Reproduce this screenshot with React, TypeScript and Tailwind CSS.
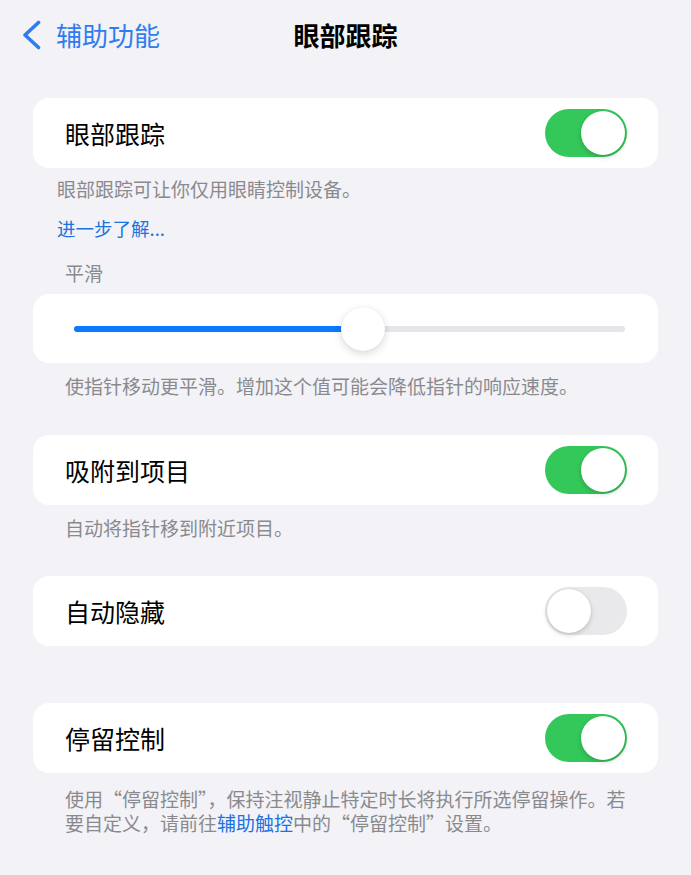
import React from "react";

function Toggle({ on }: { on: boolean }) {
  return (
    <div
      className={
        "relative flex h-[48px] w-[82px] shrink-0 items-center rounded-full p-[2px] " +
        (on ? "justify-end bg-[#34c759]" : "justify-start bg-[#e9e9eb]")
      }
    >
      <div className="h-[44px] w-[44px] rounded-full bg-white shadow-[0_2px_5px_rgba(0,0,0,0.18),0_0_1px_rgba(0,0,0,0.1)]" />
    </div>
  );
}

function SwitchRow({ label, on }: { label: string; on: boolean }) {
  return (
    <div className="flex h-[70px] items-center justify-between rounded-[16px] bg-white pl-[32px] pr-[31px]">
      <span className="text-[25px] leading-none text-black">{label}</span>
      <Toggle on={on} />
    </div>
  );
}

function Footnote({ children, className = "" }: { children: React.ReactNode; className?: string }) {
  return (
    <p className={"pl-[32px] pr-[20px] text-[19px] leading-[26px] text-[#8a8a8e] " + className}>
      {children}
    </p>
  );
}

export default function App() {
  const smoothing = 0.524;
  return (
    <div className="min-h-[875px] w-full bg-[#f2f2f7] [font-family:'Noto_Sans_CJK_SC','Noto_Sans',sans-serif]">
      {/* navigation bar */}
      <div className="grid h-[70px] grid-cols-[1fr_auto_1fr] items-center px-[21px]">
        <div className="flex items-center gap-[15px] text-[#2f7cf0]">
          <svg width="20" height="30" viewBox="0 0 20 30" fill="none">
            <path
              d="M17.5 2.5 L4 15 L17.5 27.5"
              stroke="currentColor"
              strokeWidth="3.6"
              strokeLinecap="round"
              strokeLinejoin="round"
            />
          </svg>
          <span className="text-[26px] leading-none">辅助功能</span>
        </div>
        <div className="text-[26px] font-bold leading-none text-black">眼部跟踪</div>
        <div />
      </div>

      <div className="px-[33px]">
        <div className="mt-[28px]">
          <SwitchRow label="眼部跟踪" on />
        </div>
        <p className="mt-[8px] pl-[24px] text-[19px] leading-[26px] text-[#8a8a8e]">
          眼部跟踪可让你仅用眼睛控制设备。
        </p>
        <p className="mt-[13px] pl-[24px] text-[18.5px] leading-[26px] text-[#1a73e0]">进一步了解...</p>

        <Footnote className="mt-[19px]">平滑</Footnote>

        {/* smoothing slider */}
        <div className="mt-[8px] flex h-[69px] items-center rounded-[16px] bg-white pl-[41px] pr-[33px]">
          <div className="relative h-[6px] w-full rounded-full bg-[#e5e5ea]">
            <div
              className="absolute left-0 top-0 h-full rounded-full bg-[#0a7aff]"
              style={{ width: `${smoothing * 100}%` }}
            />
            <div
              className="absolute top-1/2 h-[44px] w-[44px] -translate-x-1/2 -translate-y-1/2 rounded-full bg-white shadow-[0_3px_8px_rgba(0,0,0,0.15),0_0_1px_rgba(0,0,0,0.12)]"
              style={{ left: `${smoothing * 100}%` }}
            />
          </div>
        </div>
        <Footnote className="mt-[10px]">使指针移动更平滑。增加这个值可能会降低指针的响应速度。</Footnote>

        <div className="mt-[36px]">
          <SwitchRow label="吸附到项目" on />
        </div>
        <Footnote className="mt-[10px]">自动将指针移到附近项目。</Footnote>

        <div className="mt-[35px]">
          <SwitchRow label="自动隐藏" on={false} />
        </div>

        <div className="mt-[57px]">
          <SwitchRow label="停留控制" on />
        </div>
        <div className="mt-[14px] pl-[32px] pr-[20px] text-[19px] leading-[24px] text-[#8a8a8e]">
          <p>使用“停留控制”，保持注视静止特定时长将执行所选停留操作。若</p>
          <p>
            要自定义，请前往<span className="text-[#1a73e0]">辅助触控</span>中的“停留控制”设置。
          </p>
        </div>
      </div>
    </div>
  );
}
